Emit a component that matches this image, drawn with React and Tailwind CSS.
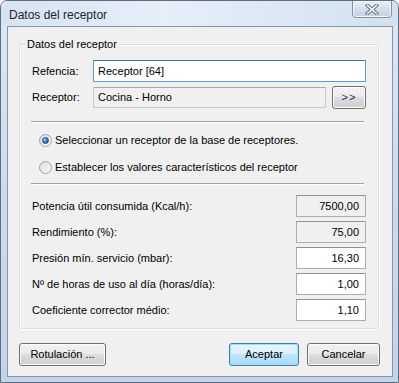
import React from 'react';

const font = { fontFamily: '"Liberation Sans", Arial, sans-serif' };

function Radio({ checked, label }) {
  return (
    <div className="flex items-center h-[13px]">
      <span className="w-[13px] h-[13px] rounded-full border border-[#a3a3a3] bg-gradient-to-br from-[#dcdcdc] to-[#fafafa] flex items-center justify-center shrink-0">
        {checked && (
          <span className="w-[7px] h-[7px] rounded-full bg-[radial-gradient(circle_at_35%_35%,#9fd4ff,#1f6fc2_60%,#0d3f80)] border border-[#1b4f8c]" />
        )}
      </span>
      <span className="ml-[3px] text-[11px] text-black leading-none">{label}</span>
    </div>
  );
}

function WinButton({ children, width, primary }) {
  return (
    <button
      className={
        'h-[23px] rounded-[3px] border text-[11px] text-black flex items-center justify-center ' +
        (primary
          ? 'border-[#3c7fb1] bg-[linear-gradient(#eaf6fd_0%,#d9f0fc_45%,#bee6fd_50%,#a7d9f5_100%)] shadow-[inset_0_0_0_1px_#9de1fd]'
          : 'border-[#707070] bg-[linear-gradient(#f2f2f2_0%,#ebebeb_45%,#dddddd_50%,#cfcfcf_100%)] shadow-[inset_0_0_0_1px_#fcfcfc]')
      }
      style={{ width }}
    >
      {children}
    </button>
  );
}

function NumRow({ label, value, readOnly }) {
  return (
    <div className="flex items-center justify-between h-[22px]">
      <span className="text-[11px] text-black">{label}</span>
      <div
        className={
          'w-[70px] h-[22px] border border-[#abadb3] border-t-[#8f9296] flex items-center justify-end pr-[6px] text-[11px] text-black ' +
          (readOnly ? 'bg-[#f0f0f0]' : 'bg-white')
        }
      >
        {value}
      </div>
    </div>
  );
}

function Separator() {
  return (
    <div className="ml-[11px] mr-[14px]">
      <div className="h-px bg-[#a0a0a0]" />
      <div className="h-px bg-white" />
    </div>
  );
}

export default function App() {
  const rows = [
    { label: 'Potencia útil consumida (Kcal/h):', value: '7500,00', readOnly: true },
    { label: 'Rendimiento (%):', value: '75,00', readOnly: true },
    { label: 'Presión mín. servicio (mbar):', value: '16,30' },
    { label: 'Nº de horas de uso al día (horas/día):', value: '1,00' },
    { label: 'Coeficiente corrector médio:', value: '1,10' },
  ];

  return (
    <div
      className="w-[399px] h-[383px] flex flex-col rounded-t-[7px] border border-[#5e6f84] bg-[linear-gradient(180deg,#dde8f4_0%,#cfdeee_40%,#c2d4e8_100%)] overflow-hidden"
      style={font}
    >
      {/* title bar */}
      <div className="h-[25px] flex items-start justify-between pl-[8px] pr-[6px] bg-[linear-gradient(90deg,#d7e3f1_0%,#e6eef8_40%,#d3e1f0_100%)]">
        <span className="mt-[5px] text-[12px] text-[#1a2433]">Datos del receptor</span>
        <div className="w-[40px] h-[18px] -mt-px rounded-b-[4px] border border-[#7f8fa3] bg-[linear-gradient(#e9eff6,#d4dfeb_50%,#c6d3e2)] shadow-[inset_0_0_0_1px_#f4f7fb] flex items-center justify-center">
          <svg width="14" height="11" viewBox="0 0 14 11">
            <path d="M2.5 1.5 L11.5 9.5 M11.5 1.5 L2.5 9.5" stroke="#6a7584" strokeWidth="3.6" strokeLinecap="square" />
            <path d="M2.5 1.5 L11.5 9.5 M11.5 1.5 L2.5 9.5" stroke="#f4f6f9" strokeWidth="1.6" strokeLinecap="square" />
          </svg>
        </div>
      </div>

      {/* client area */}
      <div className="flex-1 ml-[6px] mr-[5px] mb-[5px] border border-[#8697ab] bg-[#f0f0f0] flex flex-col">
        {/* group box */}
        <div className="relative ml-[11px] mt-[17px] w-[360px] h-[285px] rounded-[3px] border border-[#d5dfe5] shadow-[inset_1px_1px_0_#ffffff,1px_1px_0_#ffffff] flex flex-col">
          <span className="absolute -top-[7px] left-[5px] px-[2px] bg-[#f0f0f0] text-[11px] leading-[13px] text-black">
            Datos del receptor
          </span>

          <div className="mt-[15px] flex items-center pl-[12px] pr-[12px]">
            <span className="w-[61px] text-[11px] text-black">Refencia:</span>
            <div className="flex-1 h-[22px] bg-white border border-[#569de5] border-t-[#3d7bad] flex items-center pl-[4px] text-[11px] text-black">
              Receptor [64]
            </div>
          </div>

          <div className="mt-[4px] flex items-center pl-[12px] pr-[12px]">
            <span className="w-[61px] text-[11px] text-black">Receptor:</span>
            <div className="w-[233px] h-[21px] bg-[#f0f0f0] border border-[#c9c9c9] border-t-[#a8a8a8] flex items-center pl-[4px] text-[11px] text-black">
              Cocina - Horno
            </div>
            <div className="ml-auto">
              <WinButton width={34}>
                <span className="text-[#1c2a6b] tracking-[1px] -mt-px">&gt;&gt;</span>
              </WinButton>
            </div>
          </div>

          <div className="mt-[12px]">
            <Separator />
          </div>

          <div className="mt-[11px] pl-[19px] flex flex-col gap-[14px]">
            <Radio checked label="Seleccionar un receptor de la base de receptores." />
            <Radio label="Establecer los valores característicos del receptor" />
          </div>

          <div className="mt-[9px]">
            <Separator />
          </div>

          <div className="mt-[10px] pl-[12px] pr-[12px] flex flex-col gap-[4px]">
            {rows.map(r => (
              <NumRow key={r.label} {...r} />
            ))}
          </div>
        </div>

        {/* bottom buttons */}
        <div className="mt-[14px] ml-[11px] mr-[12px] flex items-center">
          <WinButton width={87}>Rotulación ...</WinButton>
          <div className="ml-auto flex gap-[8px]">
            <WinButton width={70} primary>Aceptar</WinButton>
            <WinButton width={73}>Cancelar</WinButton>
          </div>
        </div>
      </div>
    </div>
  );
}
